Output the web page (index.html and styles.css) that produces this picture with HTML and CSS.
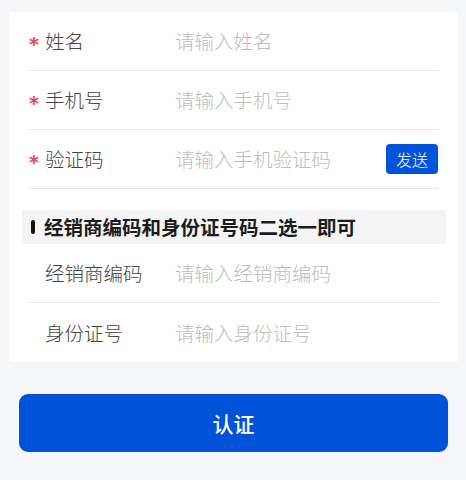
FILE: index.html
```html
<!DOCTYPE html>
<html lang="zh-CN">
<head>
<meta charset="utf-8">
<title>认证</title>
<link rel="stylesheet" href="styles.css">
</head>
<body>
<div class="card">
  <div class="row">
    <div class="label"><span class="req">*</span>姓名</div>
    <div class="input">请输入姓名</div>
  </div>
  <div class="row">
    <div class="label"><span class="req">*</span>手机号</div>
    <div class="input">请输入手机号</div>
  </div>
  <div class="row">
    <div class="label"><span class="req">*</span>验证码</div>
    <div class="input">请输入手机验证码</div>
    <button class="send">发送</button>
  </div>
  <div class="section">
    <span class="bar"></span>
    <span class="section-title">经销商编码和身份证号码二选一即可</span>
  </div>
  <div class="row">
    <div class="label"><span class="req hidden">*</span>经销商编码</div>
    <div class="input">请输入经销商编码</div>
  </div>
  <div class="row last">
    <div class="label"><span class="req hidden">*</span>身份证号</div>
    <div class="input">请输入身份证号</div>
  </div>
</div>
<button class="submit">认证</button>
</body>
</html>
```
FILE: styles.css
```css
html, body {
  margin: 0;
  padding: 0;
}
body {
  background: #f5f6f8;
  font-family: "Noto Sans CJK SC", "Noto Sans", sans-serif;
  width: 466px;
  height: 480px;
  overflow: hidden;
}
.card {
  background: #ffffff;
  margin: 12px 8px 0 9px;
  border-radius: 3px;
  display: flex;
  flex-direction: column;
}
.row {
  display: flex;
  align-items: center;
  height: 58px;
  margin: 0 20px;
  border-bottom: 1px solid #e8e8e8;
}
.row.last {
  border-bottom: none;
  height: 59px;
}
.label {
  width: 146px;
  flex-shrink: 0;
  display: flex;
  align-items: center;
  font-size: 19.5px;
  font-weight: 300;
  color: #444444;
  line-height: 26px;
}
.req {
  width: 16px;
  color: #ee4450;
  font-size: 19px;
  font-weight: 700;
  position: relative;
  top: 3px;
  font-family: "DejaVu Sans", sans-serif;
}
.req.hidden {
  visibility: hidden;
}
.input {
  flex: 1;
  font-size: 19.5px;
  font-weight: 300;
  color: #bdbdbd;
  line-height: 26px;
}
.send {
  width: 52px;
  height: 30px;
  border: none;
  border-radius: 4px;
  background: #0052d9;
  color: #ffffff;
  font-family: "Noto Sans CJK SC", sans-serif;
  font-size: 16px;
  font-weight: 300;
  padding: 0;
  line-height: 30px;
}
.section {
  margin: 21px 12px 0 13px;
  height: 34px;
  background: #f4f4f5;
  display: flex;
  align-items: center;
}
.bar {
  width: 4px;
  height: 14px;
  border-radius: 2px;
  background: #111111;
  margin-left: 9px;
  margin-right: 9px;
}
.section-title {
  font-size: 19.5px;
  font-weight: 700;
  color: #1c1c1c;
  line-height: 26px;
}
.submit {
  display: block;
  margin: 32px 18px 0 19px;
  width: 429px;
  height: 58px;
  border: none;
  border-radius: 9px;
  background: #0052d9;
  color: #ffffff;
  font-family: "Noto Sans CJK SC", sans-serif;
  font-size: 21px;
  font-weight: 500;
  padding: 0;
}
```
